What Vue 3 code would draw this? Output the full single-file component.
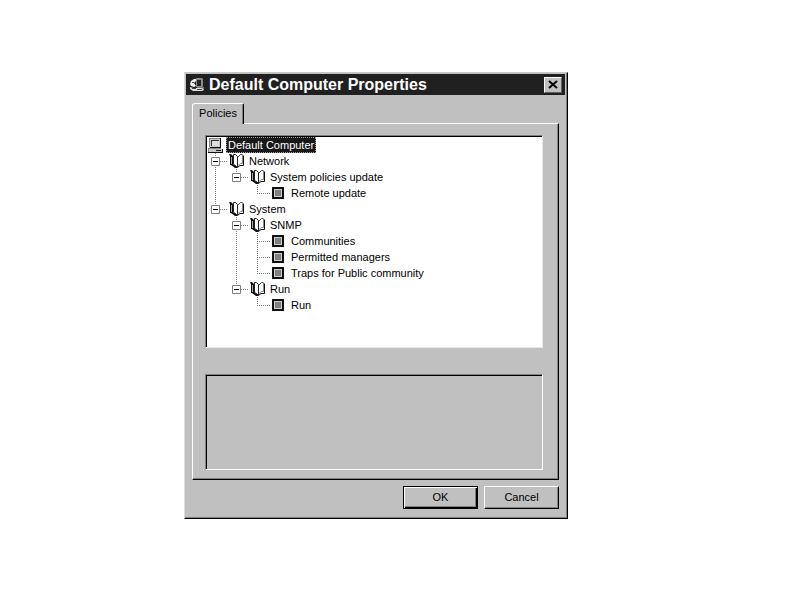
<script setup>
// Default Computer Properties dialog: policy tree, settings pane, OK / Cancel
import { computed, ref } from "vue";

const tree = ref([
  {
    label: "Network",
    open: true,
    children: [
      {
        label: "System policies update",
        open: true,
        children: [{ label: "Remote update", state: false }],
      },
    ],
  },
  {
    label: "System",
    open: true,
    children: [
      {
        label: "SNMP",
        open: true,
        children: [
          { label: "Communities", state: false },
          { label: "Permitted managers", state: false },
          { label: "Traps for Public community", state: false },
        ],
      },
      {
        label: "Run",
        open: true,
        children: [{ label: "Run", state: false }],
      },
    ],
  },
]);

// flatten the tree into rows; guides tell which ancestor lines run through
function flatten(nodes, guides, path) {
  return nodes.flatMap((node, i) => {
    const last = i === nodes.length - 1;
    const id = path + "-" + i;
    const row = { node, guides, last, id };
    if (!node.children || !node.open) return [row];
    return [row, ...flatten(node.children, [...guides, !last], id)];
  });
}

const rows = computed(() => flatten(tree.value, [], "policy"));
</script>

<template>
  <main class="dialog" role="dialog" aria-labelledby="dialog-title">
    <header class="titlebar">
      <svg class="title-icon" width="16" height="16" viewBox="0 0 16 16">
        <path d="M7 1h6l1 1v8H7z" fill="#8a8a8a" />
        <path d="M8 3h4v6H8z" fill="#242424" />
        <path d="M8 10h7v3H8z" fill="#777" />
        <path d="M2 4l3-2h2v2L5 6l2 3-2 1-3-1-1-2z" fill="#eee" />
        <path d="M1 10l3 1 3 0h6l2 2-2 1H4l-3-2z" fill="#ddd" />
        <path d="M3 5h2v1H3zM3 11h4v1H3zM8 12h5v1H8z" fill="#444" />
      </svg>
      <h1 id="dialog-title">Default Computer Properties</h1>
      <button class="close" type="button" aria-label="Close">
        <svg width="10" height="9" viewBox="0 0 10 9">
          <path d="M1 1l8 7M9 1L1 8" stroke="#000" stroke-width="2" />
        </svg>
      </button>
    </header>

    <div class="body">
      <div class="tabs" role="tablist">
        <button class="tab" type="button" role="tab" aria-selected="true">Policies</button>
      </div>

      <section class="panel" role="tabpanel">
        <ul class="tree">
          <li class="row">
            <span class="icon">
              <svg width="16" height="16" viewBox="0 0 16 16" shape-rendering="crispEdges">
                <path d="M1 1h11v10H1z" fill="#c8c8c8" />
                <path d="M1 1h11v1H1zM1 1h1v9H1z" fill="#888" />
                <path d="M12 1h1v10h-1zM2 10h11v1H2z" fill="#111" />
                <path d="M3 3h8v6H3z" fill="#ddd" />
                <path d="M3 3h8v1H3zM3 3h1v6H3z" fill="#333" />
                <path d="M0 12h14v3H0z" fill="#c8c8c8" />
                <path d="M0 11h13v1H0zM0 12h1v3H0z" fill="#888" />
                <path d="M14 12h1v4h-1zM0 15h15v1H0zM8 13h5v1H8z" fill="#111" />
              </svg>
            </span>
            <span class="label selected">Default Computer</span>
          </li>

          <li v-for="row in rows" :key="row.id" class="row">
            <svg
              v-for="(line, g) in row.guides"
              :key="g"
              class="guide"
              width="21"
              height="16"
              viewBox="0 0 21 16"
            >
              <path v-if="line" class="dots" d="M8.500 0v16" />
            </svg>
            <button
              v-if="row.node.children"
              class="toggle"
              type="button"
              :aria-label="row.node.label"
              :aria-expanded="row.node.open"
              @click="row.node.open = !row.node.open"
            >
              <svg class="guide" width="21" height="16" viewBox="0 0 21 16">
                <path class="dots" :d="row.last ? 'M8.500 0v8' : 'M8.500 0v16'" />
                <path class="dots" d="M13 8.500h8" />
                <path d="M4.500 4.500h8v8h-8z" fill="#fff" stroke="#808080" />
                <path d="M6 8.500h5" stroke="#000" />
                <path v-if="!row.node.open" d="M8.500 6v5" stroke="#000" />
              </svg>
            </button>
            <svg v-else class="guide" width="21" height="16" viewBox="0 0 21 16">
              <path class="dots" :d="row.last ? 'M8.500 0v8' : 'M8.500 0v16'" />
              <path class="dots" d="M8 8.500h13" />
            </svg>

            <template v-if="row.node.children">
              <span class="icon">
                <svg width="17" height="16" viewBox="0 0 17 16">
                  <path d="M0 1h2l2 2v8l4 2v2H6l-4-3H1V3z" fill="#111" />
                  <path d="M2.500 4v7" stroke="#aaa" />
                  <path d="M4.500 1.500H7l2 2v11l-2.500-2-2-1z" fill="#fff" />
                  <path d="M9.500 4l2-2.500H14v10l-4.500 2z" fill="#fff" />
                  <path d="M4.500 11.500v-10h2l2 2v11l-2-2z" fill="none" stroke="#222" />
                  <path d="M9 4l2.500-2.500h2" fill="none" stroke="#444" />
                  <path d="M13.500 2v8.500h-2L9 12.500" fill="none" stroke="#888" />
                  <path d="M14.500 2.500v10H11L8.500 14.500" fill="none" stroke="#111" />
                </svg>
              </span>
              <span class="label">{{ row.node.label }}</span>
            </template>
            <template v-else>
              <span class="icon">
                <input :id="row.id" v-model="row.node.state" class="check" type="checkbox" />
              </span>
              <label class="label" :for="row.id">{{ row.node.label }}</label>
            </template>
          </li>
        </ul>

        <div class="settings"></div>
      </section>

      <footer class="actions">
        <button class="btn primary" type="button">OK</button>
        <button class="btn" type="button">Cancel</button>
      </footer>
    </div>
  </main>
</template>

<style>
body {
  background: #fff;
}
</style>

<style scoped>
.dialog {
  box-sizing: border-box;
  width: 48%;
  min-width: 300px;
  margin: 72px 0 0 23%;
  border: 1px solid;
  border-color: #c8c8c8 #000 #000 #dcdcdc;
  box-shadow: inset -1px -1px 0 #808080;
  padding: 1px 2px 1px 1px;
  background: #c0c0c0;
  color: #000;
  font: 11px/16px "Liberation Sans", Arial, sans-serif;
}
button {
  margin: 0;
  padding: 0;
  border: 0;
  background: #c0c0c0;
  color: inherit;
  font: inherit;
}

.titlebar {
  display: flex;
  align-items: center;
  gap: 4px;
  height: 21px;
  padding: 0 3px;
  background: #202020;
}
.titlebar h1 {
  flex: 1;
  margin: 0;
  color: #fff;
  font-size: 16px;
  font-weight: 700;
  line-height: 21px;
  white-space: nowrap;
}
.close {
  display: flex;
  align-items: center;
  justify-content: center;
  width: 18px;
  height: 16px;
  border: 1px solid;
  border-color: #fff #606060 #606060 #fff;
}

.body {
  padding: 8px 6px;
}
.tabs {
  display: flex;
}
/* the tab covers the top edge of the panel */
.tab {
  position: relative;
  z-index: 1;
  box-sizing: border-box;
  min-width: 52px;
  height: 21px;
  margin-bottom: -1px;
  padding: 0 4px 2px;
  border: 1px solid;
  border-color: #fff #000 transparent #fff;
  border-bottom: 0;
  border-radius: 3px 2px 0 0;
  box-shadow: inset -1px 0 0 #808080;
}
.panel {
  border: 1px solid;
  border-color: #fff #000 #000 #fff;
  box-shadow: inset -1px -1px 0 #808080;
  padding: 11px 15px 9px 12px;
}

.tree,
.settings {
  box-sizing: border-box;
  margin: 0;
  border: 1px solid;
  border-color: #808080 #fff #fff #808080;
  box-shadow: inset 1px 1px 0 #000;
  padding: 1px;
}
.tree {
  min-height: 213px;
  background: #fff;
  border-color: #808080 #e8e8e8 #e8e8e8 #808080;
  list-style: none;
}
.settings {
  height: 96px;
  margin-top: 26px;
}

.row {
  display: flex;
  height: 16px;
}
.guide {
  display: block;
  flex: none;
}
.dots {
  fill: none;
  stroke: #808080;
  stroke-dasharray: 1 1;
}
.toggle {
  background: none;
}
.icon {
  box-sizing: border-box;
  display: flex;
  flex: none;
  align-items: center;
  width: 19px;
  padding-left: 1px;
}
.label {
  padding: 0 2px;
  white-space: nowrap;
}
.selected {
  background: #181818;
  outline: 1px dotted #a0a0a0;
  outline-offset: -1px;
  color: #fff;
}
.check {
  appearance: none;
  box-sizing: border-box;
  width: 12px;
  height: 12px;
  margin: 0 0 0 1px;
  border: 2px solid #111;
  background: #808080;
  box-shadow: inset 0 0 0 1px #ccc;
}
.check:checked {
  background: #000;
}

.actions {
  display: flex;
  justify-content: flex-end;
  gap: 6px;
  margin-top: 6px;
}
.btn {
  width: 75px;
  height: 23px;
  padding-bottom: 2px;
  border: 1px solid;
  border-color: #fff #000 #000 #fff;
  box-shadow: inset -1px -1px 0 #808080;
}
.primary {
  border-color: #000;
  box-shadow: inset 1px 1px 0 #fff, inset -1px -1px 0 #000, inset -2px -2px 0 #808080;
}
</style>
